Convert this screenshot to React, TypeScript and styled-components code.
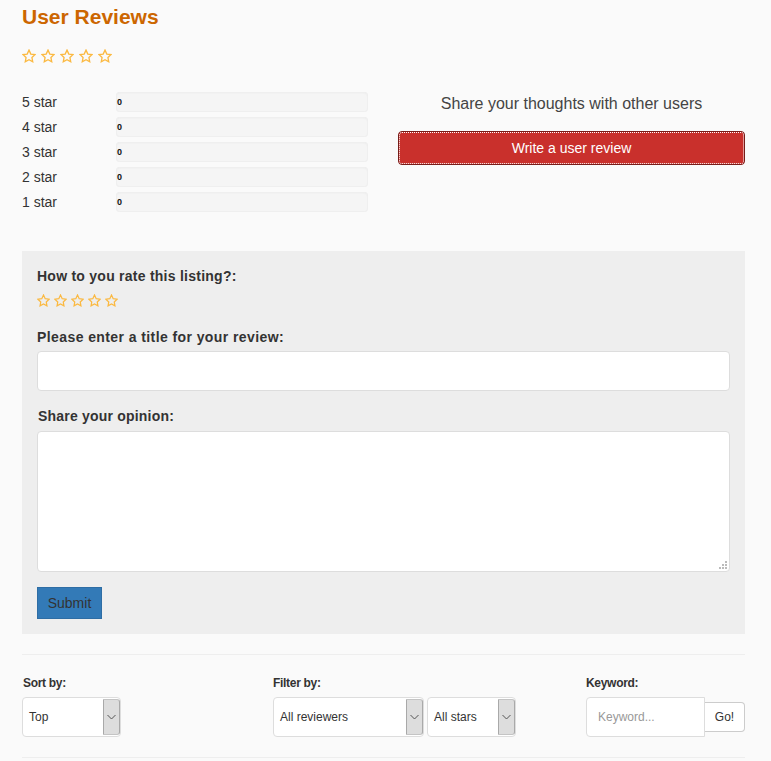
import React from 'react'
import styled, { createGlobalStyle } from 'styled-components'

const GlobalStyle = createGlobalStyle`
  html, body {
    margin: 0;
    padding: 0;
    background: #fafafa;
  }
  body {
    font-family: "Liberation Sans", Arial, sans-serif;
    font-size: 14px;
    color: #333;
  }
  * {
    box-sizing: border-box;
  }
`

const Page = styled.div`
  width: 771px;
  height: 761px;
  padding: 6px 26px 0 22px;
  overflow: hidden;
`

const Title = styled.h2`
  margin: 0;
  font-size: 21px;
  line-height: 22px;
  font-weight: bold;
  color: #cc6600;
`

const Stars = styled.div<{ $size: number; $gap: number }>`
  display: flex;
  gap: ${(p) => p.$gap}px;
  margin-left: -0.5px;
  svg {
    display: block;
    width: ${(p) => p.$size}px;
    height: ${(p) => p.$size}px;
  }
`

const TopStars = styled(Stars)`
  margin-top: 21px;
`

const Summary = styled.div`
  display: flex;
  justify-content: space-between;
  margin-top: 29px;
`

const Bars = styled.div`
  display: flex;
  flex-direction: column;
  gap: 5px;
  width: 346px;
`

const BarRow = styled.div`
  display: flex;
  align-items: center;
  height: 20px;
`

const BarLabel = styled.span`
  width: 94px;
  line-height: 20px;
`

const Bar = styled.div`
  flex: 1;
  height: 20px;
  padding-left: 1px;
  border-radius: 4px;
  background: #f5f5f5;
  box-shadow: inset 0 0 0 1px #efefef, inset 0 1px 2px rgba(0, 0, 0, 0.06);
  font-size: 9px;
  font-weight: bold;
  line-height: 20px;
  color: #111;
`

const Share = styled.div`
  width: 347px;
  text-align: center;
`

const ShareText = styled.div`
  margin-top: 1px;
  margin-bottom: 16px;
  font-size: 16px;
  line-height: 22px;
  color: #444;
`

const WriteButton = styled.button`
  display: block;
  width: 100%;
  height: 34px;
  padding: 0;
  border: 1px solid #761c19;
  border-radius: 4px;
  background: #c9302c;
  color: #fff;
  font: 14px "Liberation Sans", Arial, sans-serif;
  outline: 1px dotted #fff;
  outline-offset: -2px;
`

const Panel = styled.form`
  margin-top: 39px;
  height: 383px;
  padding: 15px;
  background: #eee;
`

const FieldLabel = styled.label<{ $tracking: number }>`
  display: block;
  font-size: 14px;
  line-height: 20px;
  font-weight: bold;
  letter-spacing: ${(p) => p.$tracking}px;
`

const PanelStars = styled(Stars)`
  margin-top: 8px;
`

const TitleLabel = styled(FieldLabel)`
  margin-top: 20px;
  margin-bottom: 4px;
`

const OpinionLabel = styled(FieldLabel)`
  margin-top: 15px;
  margin-bottom: 5px;
  margin-left: 1px;
`

const TextInput = styled.input`
  display: block;
  width: 693px;
  height: 40px;
  border: 1px solid #ddd;
  border-radius: 4px;
  background: #fff;
  padding: 0 12px;
`

const TextAreaWrap = styled.div`
  position: relative;
  width: 693px;
  height: 141px;
`

const TextArea = styled.textarea`
  display: block;
  width: 100%;
  height: 100%;
  border: 1px solid #ddd;
  border-radius: 4px;
  background: #fff;
  padding: 6px 12px;
  resize: none;
`

const Grip = styled.svg`
  position: absolute;
  right: 3px;
  bottom: 3px;
  width: 8px;
  height: 8px;
  fill: #bbb;
`

const SubmitButton = styled.button`
  display: block;
  width: 65px;
  height: 32px;
  margin-top: 15px;
  padding: 0;
  border: 1px solid #2e6da4;
  background: #337ab7;
  color: #333;
  font: 14px "Liberation Sans", Arial, sans-serif;
`

const Rule = styled.hr<{ $top: number }>`
  margin: ${(p) => p.$top}px 0 0;
  border: 0;
  border-top: 1px solid #eee;
`

const Filters = styled.div`
  display: flex;
  height: 82px;
`

const FilterColumn = styled.div<{ $width: number }>`
  width: ${(p) => p.$width}px;
`

const FilterLabel = styled.div<{ $indent?: number }>`
  font-size: 12px;
  font-weight: bold;
  line-height: 14px;
  letter-spacing: -0.3px;
  margin: 21px 0 7px ${(p) => p.$indent ?? 0}px;
`

const Controls = styled.div`
  display: flex;
  align-items: center;
  gap: 3px;
`

const SelectBox = styled.div<{ $width: number }>`
  display: flex;
  width: ${(p) => p.$width}px;
  height: 40px;
  padding: 1px 0 1px 1px;
  border: 1px solid #ddd;
  border-radius: 4px;
  background: #fff;
  font-size: 12px;
`

const SelectValue = styled.span`
  flex: 1;
  padding-left: 5px;
  line-height: 36px;
`

const SelectArrow = styled.span`
  display: flex;
  align-items: center;
  justify-content: center;
  width: 17px;
  background: #ddd;
  border-left: 1px solid #a9a9a9;
  border-right: 1px solid #a9a9a9;
  border-top: 1px solid #c4c4c4;
  border-bottom: 1px solid #c4c4c4;
  border-radius: 0 3px 3px 0;
`

const KeywordGroup = styled.div`
  display: flex;
  align-items: center;
`

const KeywordInput = styled.input`
  width: 119px;
  height: 40px;
  padding: 0 11px;
  border: 1px solid #ddd;
  border-radius: 4px 0 0 4px;
  background: #fff;
  font: 12px "Liberation Sans", Arial, sans-serif;
  &::placeholder {
    color: #999;
  }
`

const GoButton = styled.button`
  width: 40px;
  height: 30px;
  padding: 0;
  border: 1px solid #ccc;
  border-left: 0;
  border-radius: 0 4px 4px 0;
  background: #fff;
  color: #333;
  font: 12px "Liberation Sans", Arial, sans-serif;
`

const StarIcon = () => (
  <svg viewBox="2 2 20 20" fill="none" stroke="#fbb941" strokeWidth="1.9" strokeLinejoin="miter">
    <path d="M12 3.6l2.6 5.6 6 .8-4.4 4.2 1.1 6L12 17.3l-5.3 2.9 1.1-6L3.4 10l6-.8z" />
  </svg>
)

const Chevron = () => (
  <svg width="9" height="6" viewBox="0 0 9 6" fill="none" stroke="#555" strokeWidth="1">
    <path d="M.5 1l4 4 4-4" />
  </svg>
)

const Select: React.FC<{ value: string; width: number }> = ({ value, width }) => (
  <SelectBox $width={width}>
    <SelectValue>{value}</SelectValue>
    <SelectArrow>
      <Chevron />
    </SelectArrow>
  </SelectBox>
)

const StarRow = [0, 1, 2, 3, 4]
const ratings = ['5 star', '4 star', '3 star', '2 star', '1 star']

const App: React.FC = () => (
  <Page>
    <GlobalStyle />
    <Title>User Reviews</Title>
    <TopStars $size={14} $gap={5}>
      {StarRow.map((i) => (
        <StarIcon key={i} />
      ))}
    </TopStars>

    <Summary>
      <Bars>
        {ratings.map((label) => (
          <BarRow key={label}>
            <BarLabel>{label}</BarLabel>
            <Bar>0</Bar>
          </BarRow>
        ))}
      </Bars>
      <Share>
        <ShareText>Share your thoughts with other users</ShareText>
        <WriteButton type="button">Write a user review</WriteButton>
      </Share>
    </Summary>

    <Panel>
      <FieldLabel $tracking={0.25}>How to you rate this listing?:</FieldLabel>
      <PanelStars $size={13} $gap={4}>
        {StarRow.map((i) => (
          <StarIcon key={i} />
        ))}
      </PanelStars>
      <TitleLabel $tracking={0.41}>Please enter a title for your review:</TitleLabel>
      <TextInput />
      <OpinionLabel $tracking={0.2}>Share your opinion:</OpinionLabel>
      <TextAreaWrap>
        <TextArea />
        <Grip viewBox="0 0 8 8">
          <rect x="6" y="0" width="2" height="2" />
          <rect x="3" y="3" width="2" height="2" />
          <rect x="6" y="3" width="2" height="2" />
          <rect x="0" y="6" width="2" height="2" />
          <rect x="3" y="6" width="2" height="2" />
          <rect x="6" y="6" width="2" height="2" />
        </Grip>
      </TextAreaWrap>
      <SubmitButton type="button">Submit</SubmitButton>
    </Panel>

    <Rule $top={20} />
    <Filters>
      <FilterColumn $width={251}>
        <FilterLabel $indent={1}>Sort by:</FilterLabel>
        <Controls>
          <Select value="Top" width={99} />
        </Controls>
      </FilterColumn>
      <FilterColumn $width={313}>
        <FilterLabel>Filter by:</FilterLabel>
        <Controls>
          <Select value="All reviewers" width={151} />
          <Select value="All stars" width={89} />
        </Controls>
      </FilterColumn>
      <FilterColumn $width={159}>
        <FilterLabel>Keyword:</FilterLabel>
        <KeywordGroup>
          <KeywordInput placeholder="Keyword..." />
          <GoButton type="button">Go!</GoButton>
        </KeywordGroup>
      </FilterColumn>
    </Filters>
    <Rule $top={20} />
  </Page>
)

export default App
